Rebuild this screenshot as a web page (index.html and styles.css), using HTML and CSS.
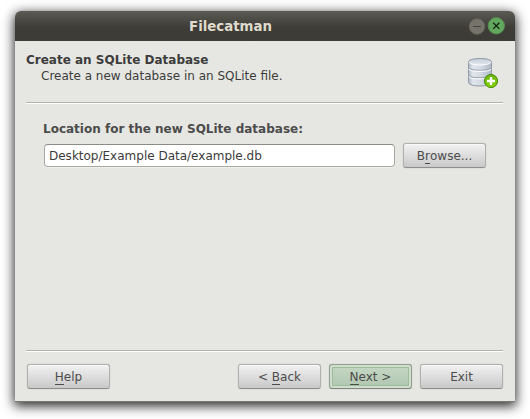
FILE: index.html
```html
<!DOCTYPE html>
<html lang="en">
<head>
<meta charset="utf-8">
<title>Filecatman</title>
<link rel="stylesheet" href="styles.css">
</head>
<body>
<main class="window">
  <header class="titlebar">
    <h1 class="title">Filecatman</h1>
    <div class="controls">
      <svg class="control" width="18" height="18" viewBox="0 0 18 18"><circle cx="9" cy="9.500" r="7.800" fill="#75736a" stroke="#65635b"/><path d="M5 9.500h8" stroke="#45443e"/></svg>
      <svg class="control" width="18" height="18" viewBox="0 0 18 18"><circle cx="9.300" cy="8.800" r="8.200" fill="#62a75e" stroke="#568b50"/><path d="M6.200 5.700l6.200 6.200M12.400 5.700l-6.200 6.200" stroke="#14220f" stroke-width="1.300"/></svg>
    </div>
  </header>
  <section class="heading">
    <div>
      <h2 class="heading-title">Create an SQLite Database</h2>
      <p class="heading-text">Create a new database in an SQLite file.</p>
    </div>
    <svg class="db-icon" width="32" height="34" viewBox="0 0 32 34">
      <defs>
        <linearGradient id="side"><stop offset="0" stop-color="#b3bcc7"/><stop offset=".2" stop-color="#e2e6ed"/><stop offset=".55" stop-color="#d3d9e2"/><stop offset="1" stop-color="#aeb8c4"/></linearGradient>
        <linearGradient id="lid" x2="0" y2="1"><stop offset="0" stop-color="#c3ccd5"/><stop offset="1" stop-color="#dfe5eb"/></linearGradient>
        <linearGradient id="plus" x2="0" y2="1"><stop offset="0" stop-color="#6cb512"/><stop offset="1" stop-color="#83d000"/></linearGradient>
      </defs>
      <path d="M1.500 4.500v21c0 4.700 23 4.700 23 0v-21z" fill="url(#side)" stroke="#8f9ba8"/>
      <path d="M1.500 10.500c0 3.700 23 3.700 23 0M1.500 18c0 3.700 23 3.700 23 0" fill="none" stroke="#98a3b0"/>
      <path d="M2 4.700c1 4.300 21 4.300 22 0M2 11.800c1 3.500 21 3.500 22 0M2 19.300c1 3.500 21 3.500 22 0" fill="none" stroke="#fafbfc" stroke-width="1.200"/>
      <ellipse cx="13" cy="4.300" rx="11.300" ry="2.900" fill="url(#lid)"/>
      <path d="M1.500 4.500c1-4 22-4 23 0" fill="none" stroke="#8f9ba8"/>
      <circle cx="24" cy="24" r="6.600" fill="url(#plus)" stroke="#4a8c0c"/>
      <path d="M24 20v8M20 24h8" stroke="#fff" stroke-width="2.400"/>
    </svg>
  </section>
  <section class="content">
    <label class="label" for="location">Location for the new SQLite database:</label>
    <div class="row">
      <input class="field" id="location" type="text" value="Desktop/Example Data/example.db">
      <button class="button">B<span class="key">r</span>owse...</button>
    </div>
  </section>
  <footer class="actions">
    <button class="button help"><span class="key">H</span>elp</button>
    <button class="button">&lt; <span class="key">B</span>ack</button>
    <button class="button primary"><span class="key">N</span>ext &gt;</button>
    <button class="button">Exit</button>
  </footer>
</main>
</body>
</html>
```
FILE: styles.css
```css
* { box-sizing: border-box; }
body {
  margin: 0;
  padding: 11px 15px 0;
  height: 419px;
  overflow: hidden;
  background: #fff;
  color: #3c3c3c;
  font: 12px/16px "DejaVu Sans", sans-serif;
}
h1, h2, p { margin: 0; }
.window {
  display: flex;
  flex-direction: column;
  width: 500px;
  height: 391px;
  background: #e6e7e2;
  border-radius: 6px 6px 0 0;
  box-shadow: inset 0 -1px #777872, 0 3px 12px 1px rgba(0, 0, 0, .85);
}
.titlebar {
  display: flex;
  align-items: center;
  height: 30px;
  padding-right: 10px;
  border-radius: 6px 6px 0 0;
  background: linear-gradient(#5b5a53, #3d3c37 55%, #3c3b36);
}
.title {
  flex: 1;
  padding: 1px 22px 0 0;
  text-align: center;
  font-size: 13.33px;
  line-height: 30px;
  color: #dfdbcd;
}
.controls { display: flex; gap: 1px; }
.control { display: block; }
.heading {
  display: flex;
  justify-content: space-between;
  height: 63px;
  margin: 0 12px 0 11px;
  padding-top: 11px;
  border-bottom: 1px solid #fff;
  box-shadow: inset 0 -1px #b1b2ad;
}
.heading-title { font-size: 12px; line-height: 16px; }
.heading-text { padding-left: 15px; }
.db-icon { margin: 5px 4px 0 0; }
.content { flex: 1; padding: 17px 29px 0 28px; }
.label { display: block; font-weight: bold; color: #4c4c4c; }
.row { display: flex; align-items: center; gap: 8px; margin: 6px 0 0 1px; }
.field {
  flex: 1;
  min-width: 0;
  height: 23px;
  padding: 0 4px;
  border: 1px solid #a8a9a3;
  border-top-color: #8b8c86;
  border-radius: 4px;
  background: #fff;
  box-shadow: 0 1px #f0f1ed;
  color: #3c3c3c;
  font: inherit;
  outline: 0;
}
.button {
  width: 83px;
  height: 25px;
  padding: 0;
  border: 1px solid #b0b0ae;
  border-bottom-color: #8d8d8b;
  border-radius: 3px;
  background: linear-gradient(#f2f2f2, #c9c9c9);
  box-shadow: inset 0 1px #fafafa, 0 0 1px rgba(0, 0, 0, .3);
  color: #4c4c4c;
  font: inherit;
}
.key {
  display: inline-block;
  height: 15px;
  line-height: 15px;
  box-shadow: inset 0 -1px #4c4c4c;
}
.actions {
  display: flex;
  gap: 8px;
  height: 52px;
  margin: 0 12px 0 11px;
  padding: 13px 0 0 1px;
  border-top: 1px solid #b1b2ad;
  box-shadow: inset 0 1px #fff;
}
.actions .button { flex: none; }
.help { margin-right: auto; }
.primary {
  border-color: #92a091;
  border-bottom-color: #7d857c;
  background: linear-gradient(#c6d8c5, #b0c6af);
  box-shadow: inset 0 0 0 2px #d0ddcf, inset 0 0 0 3px #9dbd9b, 0 0 1px rgba(0, 0, 0, .3);
}
```
